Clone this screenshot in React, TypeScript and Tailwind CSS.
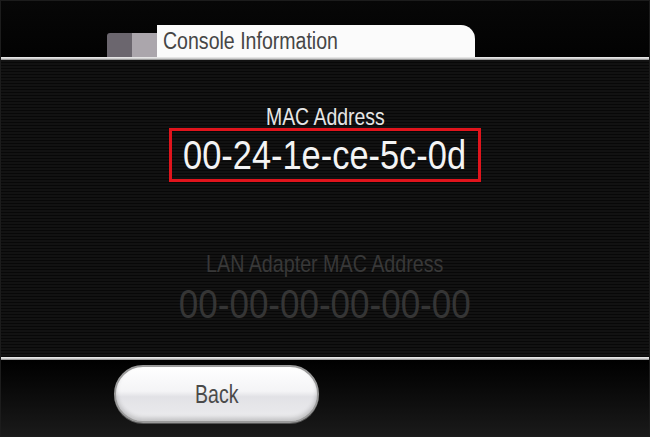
import React from "react";

export default function App() {
  const font = { fontFamily: '"Liberation Sans", Arial, sans-serif' };
  return (
    <div
      className="w-[650px] h-[437px] bg-black flex flex-col overflow-hidden border border-[#1c1c1c]"
      style={font}
    >
      {/* header with tabs */}
      <div className="h-[56px] flex items-end pl-[106px] bg-[linear-gradient(to_bottom,#070707,#020202)]">
        <div className="w-[25px] h-[24px] bg-[#6b666e] rounded-tl-[3px]" />
        <div className="w-[25px] h-[24px] bg-[#aba6ac]" />
        <div className="w-[318px] h-[32px] bg-[#fbfbfb] rounded-tr-[14px] flex items-center pl-[6px]">
          <span className="inline-block origin-left scale-x-[0.85] text-[23px] leading-none text-[#464646] whitespace-nowrap">
            Console Information
          </span>
        </div>
      </div>
      <div className="h-[3px] bg-[linear-gradient(to_bottom,#f0f0f0,#c8c8c8_60%,#7a7a7a)]" />

      {/* main content */}
      <div className="h-[297px] flex flex-col items-center pt-[45px] bg-[repeating-linear-gradient(to_bottom,#121212_0px,#121212_2px,#080808_2px,#080808_3px)]">
        <span className="inline-block scale-x-[0.81] text-[24px] leading-none text-[#e6e6e6] whitespace-nowrap">
          MAC Address
        </span>
        <div className="mt-[-1px] w-[312px] h-[54px] border-[3px] border-[#e1141c] flex items-center justify-center">
          <span className="inline-block scale-x-[0.86] text-[40px] leading-none text-[#f4f4f4] whitespace-nowrap">
            00-24-1e-ce-5c-0d
          </span>
        </div>
        <span className="mt-[70px] inline-block scale-x-[0.82] text-[24px] leading-none text-[#383838] whitespace-nowrap">
          LAN Adapter MAC Address
        </span>
        <span className="mt-[8px] inline-block scale-x-[0.875] text-[40px] leading-none text-[#353535] whitespace-nowrap">
          00-00-00-00-00-00
        </span>
      </div>
      <div className="h-[3px] bg-[linear-gradient(to_bottom,#f0f0f0,#c8c8c8_60%,#7a7a7a)]" />

      {/* footer */}
      <div className="flex-1 pl-[113px] pt-[5px] bg-[linear-gradient(to_bottom,#000000,#0a0a0a_40%,#1a1a1a)]">
        <div className="w-[205px] h-[58px] rounded-full border-[2px] border-[#9a9a9a] bg-[linear-gradient(to_bottom,#ffffff,#f4f4f6_45%,#e2e2e6_55%,#ececee)] shadow-[inset_0_-3px_4px_rgba(0,0,0,0.18),0_1px_0_#555] flex items-center justify-center">
          <span className="inline-block scale-x-[0.78] text-[25px] leading-none text-[#4a4a4a] whitespace-nowrap">
            Back
          </span>
        </div>
      </div>
    </div>
  );
}
